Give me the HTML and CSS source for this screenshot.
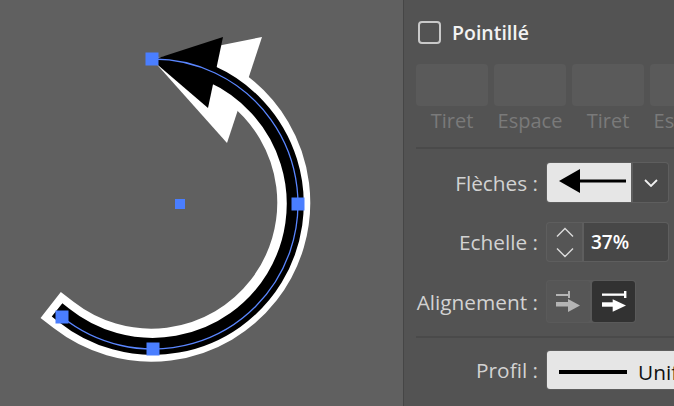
FILE: index.html
```html
<!DOCTYPE html>
<html lang="fr">
<head>
<meta charset="utf-8">
<title>Contour</title>
<link rel="stylesheet" href="styles.css">
</head>
<body>
<div class="app">
  <div class="canvas">
    <svg class="art" width="403" height="406" viewBox="0 0 403 406">
      <path d="M238.8 90.2 A142.5 142.5 0 1 1 63.7 315.1" fill="none" stroke="#ffffff" stroke-width="33" stroke-linecap="square"/>
      <polygon points="152,59 262,37 227,143" fill="#ffffff"/>
      <path d="M211 73.8 A142.5 142.5 0 1 1 63.7 315.1" fill="none" stroke="#000000" stroke-width="17" stroke-linecap="square"/>
      <polygon points="152,60 223,37 208,108" fill="#000000"/>
      <path d="M152 59 A145 145 0 1 1 62.1 317" fill="none" stroke="#5a86ff" stroke-width="1.3"/>
      <rect x="145.5" y="52.5" width="13" height="13" fill="#4a7eff"/>
      <rect x="291.5" y="197.5" width="13" height="13" fill="#4a7eff"/>
      <rect x="146.5" y="342.5" width="13" height="13" fill="#4a7eff"/>
      <rect x="55.5" y="310.5" width="13" height="13" fill="#4a7eff"/>
      <rect x="175" y="199" width="10" height="10" fill="#4a7eff"/>
    </svg>
  </div>

  <div class="panel">
    <label class="check-row">
      <span class="checkbox"></span>
      <span class="check-label">Pointillé</span>
    </label>

    <div class="dash-grid">
      <div class="dash-col"><div class="dash-box"></div><span class="dash-label">Tiret</span></div>
      <div class="dash-col"><div class="dash-box"></div><span class="dash-label">Espace</span></div>
      <div class="dash-col"><div class="dash-box"></div><span class="dash-label">Tiret</span></div>
      <div class="dash-col"><div class="dash-box"></div><span class="dash-label">Espace</span></div>
    </div>

    <div class="sep"></div>

    <div class="field row-arrow">
      <span class="field-label">Flèches :</span>
      <div class="control">
        <div class="arrow-preview">
          <svg width="84" height="39" viewBox="0 0 84 39">
            <polygon points="12,18 33,6 33,30" fill="#000"/>
            <rect x="32" y="16.5" width="47" height="3" fill="#000"/>
          </svg>
        </div>
        <div class="dropdown-btn">
          <svg width="14" height="8" viewBox="0 0 14 8">
            <polyline points="1,1 7,7 13,1" fill="none" stroke="#f0f0f0" stroke-width="1.8"/>
          </svg>
        </div>
      </div>
    </div>

    <div class="field row-scale">
      <span class="field-label">Echelle :</span>
      <div class="control">
        <div class="stepper">
          <svg width="35" height="38" viewBox="0 0 35 38">
            <polyline points="10,13.5 18,5.5 26,13.5" fill="none" stroke="#dcdcdc" stroke-width="1.4"/>
            <polyline points="10,25.5 18,33.5 26,25.5" fill="none" stroke="#dcdcdc" stroke-width="1.4"/>
          </svg>
        </div>
        <div class="value">37%</div>
      </div>
    </div>

    <div class="field row-align">
      <span class="field-label">Alignement :</span>
      <div class="control seg">
        <div class="seg-btn">
          <svg width="43" height="41" viewBox="0 0 43 41">
            <rect x="9" y="13" width="14" height="2" fill="#b4b4b4"/>
            <rect x="21" y="10" width="2" height="7" fill="#b4b4b4"/>
            <rect x="9" y="21" width="12.5" height="4.5" fill="#b4b4b4"/>
            <polygon points="21,18 21,31 33,24.5" fill="#b4b4b4"/>
          </svg>
        </div>
        <div class="seg-btn active">
          <svg width="43" height="41" viewBox="0 0 43 41">
            <rect x="10" y="12.5" width="24" height="2.3" fill="#ffffff"/>
            <rect x="32" y="10" width="2.4" height="7" fill="#ffffff"/>
            <rect x="10" y="21.3" width="11.5" height="4.4" fill="#ffffff"/>
            <polygon points="20.7,18.3 20.7,30.7 34,24.5" fill="#ffffff"/>
          </svg>
        </div>
      </div>
    </div>

    <div class="sep sep-2"></div>

    <div class="field row-profile">
      <span class="field-label">Profil :</span>
      <div class="control profile">
        <div class="profile-inner">
          <span class="profile-line"></span>
          <span class="profile-text">Uniforme</span>
        </div>
      </div>
    </div>
  </div>
</div>
</body>
</html>
```

FILE: styles.css
```css
* {
  box-sizing: border-box;
}

html,
body {
  margin: 0;
  padding: 0;
}

body {
  width: 674px;
  height: 406px;
  overflow: hidden;
  font-family: "Open Sans", "Noto Sans", sans-serif;
  background: #535353;
}

.app {
  display: flex;
  width: 674px;
  height: 406px;
}

.canvas {
  flex: 0 0 403px;
  width: 403px;
  height: 406px;
  background: #606060;
}

.art {
  display: block;
}

.panel {
  flex: 1;
  min-width: 0;
  background: #535353;
  border-left: 1px solid #464646;
  padding: 21px 0 0 12px;
  overflow: hidden;
  display: flex;
  flex-direction: column;
}

.check-row {
  display: flex;
  align-items: center;
  gap: 11px;
  height: 23px;
  padding-left: 2px;
}

.checkbox {
  flex: 0 0 23px;
  width: 23px;
  height: 23px;
  border: 2px solid #c9c9c9;
  border-radius: 4px;
}

.check-label {
  font-size: 19.5px;
  font-weight: 600;
  line-height: 23px;
  color: #f2f2f2;
}

.dash-grid {
  display: flex;
  gap: 6px;
  margin-top: 20px;
}

.dash-col {
  flex: 0 0 72px;
  width: 72px;
  display: flex;
  flex-direction: column;
  align-items: center;
}

.dash-box {
  width: 72px;
  height: 42px;
  background: #5a5a5a;
  border-radius: 4px;
}

.dash-label {
  margin-top: 3px;
  font-size: 20px;
  line-height: 24px;
  color: #7a7a7a;
  white-space: nowrap;
}

.sep {
  flex: 0 0 2px;
  height: 2px;
  background: #4a4a4a;
  margin-top: 14px;
}

.sep-2 {
  margin-top: 13px;
}

.field {
  display: grid;
  grid-template-columns: 122px max-content;
  column-gap: 8px;
  align-items: center;
}

.field-label {
  text-align: right;
  font-size: 20.8px;
  line-height: 24px;
  color: #d2d2d2;
  white-space: nowrap;
}

.row-arrow {
  margin-top: 13px;
}

.row-scale {
  margin-top: 19px;
}

.row-align {
  margin-top: 18px;
}

.row-profile {
  margin-top: 12px;
}

.control {
  display: flex;
  gap: 2px;
  padding: 1px;
  border-radius: 4px;
  background: #5e5e5e;
}

.arrow-preview {
  width: 84px;
  height: 39px;
  background: #e6e6e6;
  border-radius: 3px 0 0 3px;
}

.arrow-preview svg,
.stepper svg,
.seg-btn svg {
  display: block;
}

.dropdown-btn {
  width: 35px;
  height: 39px;
  background: #4a4a4a;
  border-radius: 0 3px 3px 0;
  display: flex;
  align-items: center;
  justify-content: center;
}

.stepper {
  width: 35px;
  height: 38px;
  background: #555555;
  border-radius: 3px 0 0 3px;
}

.value {
  width: 84px;
  height: 38px;
  background: #474747;
  border-radius: 0 3px 3px 0;
  padding-left: 7px;
  font-size: 19px;
  font-weight: 600;
  line-height: 38px;
  color: #ffffff;
}

.seg {
  background: #5a5a5a;
}

.seg-btn {
  width: 43px;
  height: 41px;
  background: #565656;
  border-radius: 3px;
}

.seg-btn.active {
  background: #323232;
}

.profile {
  width: 200px;
}

.profile-inner {
  flex: 1;
  height: 38px;
  background: #e6e6e6;
  display: flex;
  align-items: center;
  gap: 11px;
  padding: 3px 0 0 12px;
  border-radius: 3px 0 0 3px;
}

.profile-line {
  flex: 0 0 68px;
  height: 4px;
  background: #000000;
}

.profile-text {
  font-size: 20.8px;
  line-height: 24px;
  color: #111111;
  white-space: nowrap;
}
```
